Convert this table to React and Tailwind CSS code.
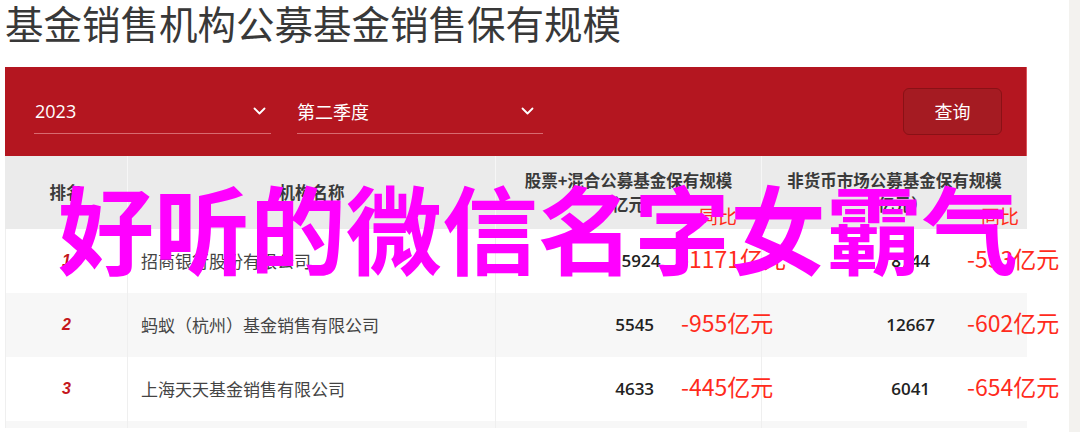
import React from "react";

const rows = [
  { rank: "1", name: "招商银行股份有限公司", a: "5924", ac: "-1171亿元", b: "8744", bc: "-553亿元", bg: "bg-white" },
  { rank: "2", name: "蚂蚁（杭州）基金销售有限公司", a: "5545", ac: "-955亿元", b: "12667", bc: "-602亿元", bg: "bg-[#f7f7f7]" },
  { rank: "3", name: "上海天天基金销售有限公司", a: "4633", ac: "-445亿元", b: "6041", bc: "-654亿元", bg: "bg-white" },
];

function Chevron() {
  return (
    <svg width="13" height="8" viewBox="0 0 13 8" fill="none">
      <polyline points="1.5,1.5 6.5,6.5 11.5,1.5" stroke="white" strokeWidth="1.8" strokeLinecap="round" strokeLinejoin="round" />
    </svg>
  );
}

export default function App() {
  return (
    <div
      className="relative flex h-[432px] w-[1080px] overflow-hidden bg-white text-[#333]"
      style={{ fontFamily: '"Noto Sans CJK SC", "Noto Sans", sans-serif' }}
    >
      <div className="h-[428px] w-[1069px] overflow-hidden pl-[5px]">
        <h1 className="h-[67px] whitespace-nowrap text-[38.5px] font-normal leading-[44px] text-[#383838]">
          基金销售机构公募基金销售保有规模
        </h1>
        <div className="w-[1022px]">
          <div className="flex h-[89px] items-center border-r border-[#d9545b] bg-[#b41620] pl-[29px] pr-[24px]">
            <div className="flex h-[44px] w-[237px] items-center justify-between border-b border-[#d86a70] pl-[1px] pr-[5px]">
              <span className="text-[18px] text-white" style={{ fontFamily: '"Open Sans", "Noto Sans CJK SC", sans-serif' }}>2023</span>
              <Chevron />
            </div>
            <div className="ml-[26px] flex h-[44px] w-[246px] items-center justify-between border-b border-[#d86a70] pr-[9px]">
              <span className="text-[18px] text-white">第二季度</span>
              <Chevron />
            </div>
            <div className="flex-1" />
            <button className="flex h-[47px] w-[99px] items-center justify-center rounded-[6px] border border-[#8a1116] bg-[#a51b22] text-[18px] text-white">
              查询
            </button>
          </div>

          <div className="grid h-[73px] grid-cols-[123px_368px_266px_265px] bg-[#ebebeb] text-[16.5px] font-bold text-[#3a3a3a]">
            <div className="flex items-center justify-center border-r border-[#f6f6f6]">排名</div>
            <div className="flex items-center justify-center border-r border-[#f6f6f6]">机构名称</div>
            <div className="flex flex-col items-center border-r border-[#f6f6f6] pt-[12px] leading-[24px]">
              <span className="whitespace-nowrap">股票+混合公募基金保有规模</span>
              <span>（亿元）</span>
              <span className="-mt-[12px] self-end pr-[24px] text-[19px] font-normal text-[#ff2b1c]">同比</span>
            </div>
            <div className="flex flex-col items-center pt-[12px] leading-[24px]">
              <span className="whitespace-nowrap">非货币市场公募基金保有规模</span>
              <span>（亿元）</span>
              <span className="-mt-[12px] self-end pr-[8px] text-[19px] font-normal text-[#ff2b1c]">同比</span>
            </div>
          </div>

          {rows.map((r) => (
            <div key={r.rank} className={`grid h-[64px] grid-cols-[123px_368px_266px_265px] ${r.bg}`}>
              <div className="flex items-center justify-center border-l border-r border-[#efefef]">
                <span className="text-[16px] font-bold italic text-[#c4161c]" style={{ fontFamily: '"Liberation Sans", Arial, sans-serif' }}>{r.rank}</span>
              </div>
              <div className="flex items-center whitespace-nowrap border-r border-[#efefef] pl-[13px] text-[17px] text-[#444]">
                {r.name}
              </div>
              <div className="grid items-center border-r border-[#efefef]">
                <span className="col-start-1 row-start-1 justify-self-center text-[17px] font-semibold text-[#222]" style={{ fontFamily: '"Open Sans", sans-serif' }}>{r.a}</span>
                <span className="col-start-1 row-start-1 mb-[6px] ml-[185px] whitespace-nowrap text-[23px] text-[#ff2b1c]">{r.ac}</span>
              </div>
              <div className="grid items-center">
                <span className="col-start-1 row-start-1 justify-self-center text-[17px] font-semibold text-[#222]" style={{ fontFamily: '"Open Sans", sans-serif' }}>{r.b}</span>
                <span className="col-start-1 row-start-1 mb-[6px] ml-[205px] whitespace-nowrap text-[23px] text-[#ff2b1c]">{r.bc}</span>
              </div>
            </div>
          ))}
          <div className="grid h-[64px] grid-cols-[123px_368px_266px_265px] bg-[#f7f7f7]">
            <div className="border-l border-r border-[#efefef]" />
            <div className="border-r border-[#efefef]" />
            <div className="border-r border-[#efefef]" />
            <div />
          </div>
        </div>
      </div>
      <div className="w-[11px] bg-[#f3f2ef]" />

      <div className="pointer-events-none absolute left-[58px] top-[178px] whitespace-nowrap text-[96px] font-bold leading-none text-[#ff00ff]">
        好听的微信名字女霸气
      </div>
    </div>
  );
}
